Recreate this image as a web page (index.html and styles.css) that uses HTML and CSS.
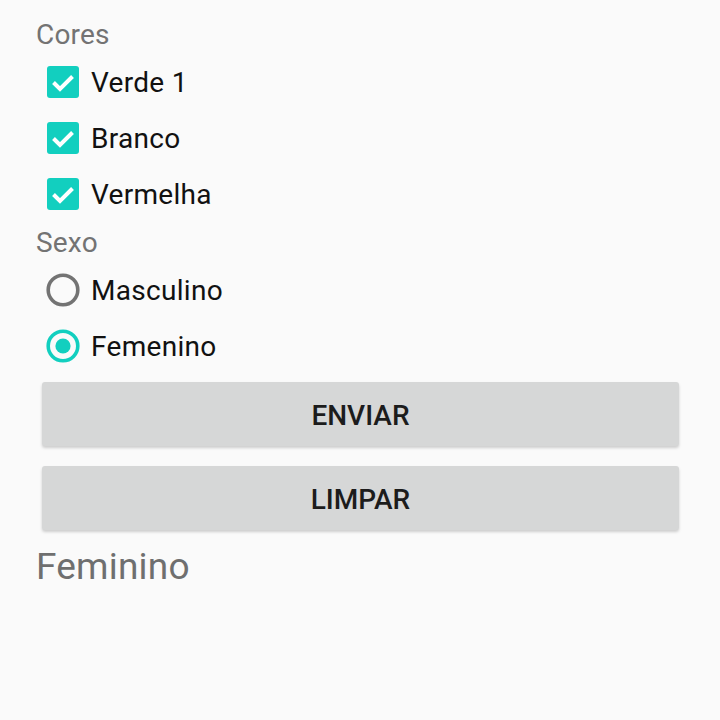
FILE: index.html
```html
<!DOCTYPE html>
<html>
<head>
<meta charset="utf-8">
<link rel="stylesheet" href="styles.css">
</head>
<body>
<div class="page">
  <div class="label">Cores</div>
  <div class="row">
    <span class="check"><svg viewBox="0 0 32 32" width="32" height="32"><rect x="0" y="0" width="32" height="32" rx="3" fill="#12cfbf"/><polyline points="6.5,16.5 13,23 25.5,10.5" fill="none" stroke="#fff" stroke-width="4"/></svg></span>
    <span class="text">Verde 1</span>
  </div>
  <div class="row">
    <span class="check"><svg viewBox="0 0 32 32" width="32" height="32"><rect x="0" y="0" width="32" height="32" rx="3" fill="#12cfbf"/><polyline points="6.5,16.5 13,23 25.5,10.5" fill="none" stroke="#fff" stroke-width="4"/></svg></span>
    <span class="text">Branco</span>
  </div>
  <div class="row">
    <span class="check"><svg viewBox="0 0 32 32" width="32" height="32"><rect x="0" y="0" width="32" height="32" rx="3" fill="#12cfbf"/><polyline points="6.5,16.5 13,23 25.5,10.5" fill="none" stroke="#fff" stroke-width="4"/></svg></span>
    <span class="text">Vermelha</span>
  </div>
  <div class="label label-sexo">Sexo</div>
  <div class="row">
    <span class="radio"><svg viewBox="0 0 34 34" width="34" height="34"><circle cx="17" cy="17" r="14.8" fill="none" stroke="#737373" stroke-width="3.6"/></svg></span>
    <span class="text">Masculino</span>
  </div>
  <div class="row">
    <span class="radio"><svg viewBox="0 0 34 34" width="34" height="34"><circle cx="17" cy="17" r="14.8" fill="none" stroke="#12cfbf" stroke-width="3.6"/><circle cx="17" cy="17" r="7.6" fill="#12cfbf"/></svg></span>
    <span class="text">Femenino</span>
  </div>
  <div class="buttons">
    <button class="btn">ENVIAR</button>
    <button class="btn">LIMPAR</button>
  </div>
  <div class="result">Feminino</div>
</div>
</body>
</html>
```
FILE: styles.css
```css
html, body {
  margin: 0;
  padding: 0;
  background: #fafafa;
}
body {
  font-family: Roboto, "Noto Sans", sans-serif;
  width: 720px;
  height: 720px;
  overflow: hidden;
}
.page {
  padding: 16px 41px 0 36px;
  display: flex;
  flex-direction: column;
}
.label {
  font-size: 28px;
  line-height: 38px;
  color: #737373;
  height: 38px;
  letter-spacing: 0.2px;
}
.label-sexo {
  margin-top: 2px;
}
.row {
  height: 56px;
  display: flex;
  align-items: center;
  gap: 12px;
  margin-left: 11px;
}
.check {
  width: 32px;
  height: 32px;
  display: flex;
}
.radio {
  width: 34px;
  height: 34px;
  display: flex;
  margin-left: -1px;
  margin-right: -1px;
}
.text {
  font-size: 28px;
  color: #111;
  letter-spacing: 0.3px;
}
.buttons {
  display: flex;
  flex-direction: column;
  gap: 20px;
  margin-top: 8px;
  margin-left: 6px;
}
.btn {
  height: 64px;
  border: none;
  border-radius: 3px;
  background: #d6d7d7;
  box-shadow: 0 2px 3px rgba(0,0,0,0.18);
  font-family: Roboto, sans-serif;
  font-weight: 500;
  font-size: 28px;
  color: #1c1c1c;
  letter-spacing: 0;
  padding: 3px 0 0 0;
}
.result {
  margin-top: 15px;
  font-size: 37px;
  line-height: 44px;
  color: #6f6f6f;
  letter-spacing: 0.2px;
}
```
